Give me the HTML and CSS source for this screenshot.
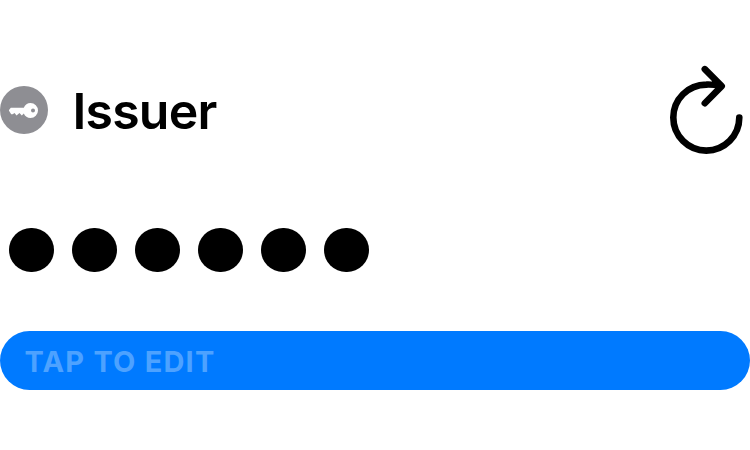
FILE: index.html
```html
<!DOCTYPE html>
<html lang="en">
<head>
<meta charset="utf-8">
<title>Issuer</title>
<link rel="stylesheet" href="styles.css">
</head>
<body>
<main class="widget">
  <header class="header">
    <svg class="key" viewBox="0 0 48 48" aria-hidden="true">
      <circle cx="24" cy="24" r="24" fill="#8e8e93"/>
      <path fill="#fff" fill-rule="evenodd" d="M23.800 21.800C25 18.900 27.500 17 30.500 17A7.500 7.500 0 0 1 30.500 32C27.500 32 25 30.300 23.800 27.500L21.800 29.500L19.500 26.900L16.500 29.500L14.600 26.900L12.600 28.300H11.200L9 24.800Q8.800 24.300 9.200 23.700L10.800 21.800ZM33 22.500A2 2 0 1 0 33 26.500A2 2 0 1 0 33 22.500Z"/>
    </svg>
    <h1 class="title">Issuer</h1>
    <svg class="refresh" viewBox="0 0 90 100" aria-hidden="true">
      <path d="M79.300 57.600A33 33 0 1 1 46.300 24.600C51 24.400 55.500 24.800 61.200 26.100M44.800 9.200L61.700 26.100L44.800 43.200" fill="none" stroke="#000" stroke-width="6.600" stroke-linecap="round" stroke-linejoin="round"/>
    </svg>
  </header>
  <div class="code">
    <i class="dot"></i><i class="dot"></i><i class="dot"></i><i class="dot"></i><i class="dot"></i><i class="dot"></i>
  </div>
  <button class="edit"><span>TAP TO EDIT</span></button>
</main>
</body>
</html>
```
FILE: styles.css
```css
body {
  margin: 0;
  background: #fff;
  font-family: Inter, sans-serif;
}
.widget {
  height: 450px;
  box-sizing: border-box;
  padding-top: 60px;
}
.header {
  display: flex;
  align-items: center;
  height: 100px;
}
.key {
  width: 48px;
  height: 48px;
}
.title {
  margin: 1px auto 0 24.500px;
  font-size: 50px;
  line-height: 60px;
  font-weight: 600;
  letter-spacing: -0.8px;
}
.refresh {
  width: 90px;
  height: 100px;
}
.code {
  display: flex;
  gap: 18.400px;
  padding: 67.500px 0 58.900px 9.200px;
}
.dot {
  width: 44.600px;
  height: 44.600px;
  border-radius: 50%;
  background: #000;
}
.edit {
  display: flex;
  align-items: center;
  width: 100%;
  height: 59px;
  padding: 3px 24.500px 0;
  border: 0;
  border-radius: 30px;
  background: #007aff;
  color: #4da2ff;
  font: 650 29px/36px Inter, sans-serif;
  letter-spacing: 1.2px;
}
```
